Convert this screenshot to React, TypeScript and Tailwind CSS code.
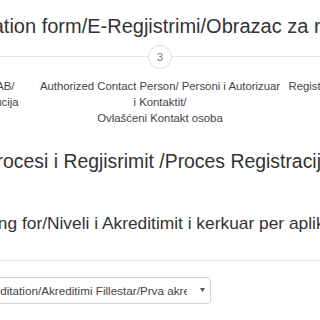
import React from 'react';

function StepCircle({ n }: { n: number }) {
  return (
    <div className="flex h-[24px] w-[24px] shrink-0 items-center justify-center rounded-full border border-[#dcdcdc] bg-white text-[11px] text-[#777]">
      {n}
    </div>
  );
}

export default function App() {
  return (
    <div
      className="h-[320px] w-[320px] overflow-hidden bg-white text-[#333]"
      style={{ fontFamily: '"Liberation Sans", Arial, sans-serif' }}
    >
      {/* page title, centred on the page */}
      <div className="mt-[14.4px] flex h-[24px] justify-center whitespace-nowrap text-[20px] leading-[24px]">
        <h1 className="shrink-0">E-Registration form/E-Regjistrimi/Obrazac za registraciju</h1>
      </div>

      {/* stepper */}
      <div className="mt-[6.6px] flex h-[24px] items-center">
        <div className="h-px flex-1 bg-[#e0e0e0]" />
        <StepCircle n={3} />
        <div className="h-px flex-1 bg-[#e0e0e0]" />
      </div>

      <div className="mt-[8.6px] flex justify-center gap-[7px] text-[11.35px] leading-[16px] text-[#444]">
        <div className="w-[243px] shrink-0 text-right">
          <div className="mr-[17px] whitespace-nowrap">Conformity Assessment Body/ TVK/ CAB/</div>
          <div className="mr-[13px] whitespace-nowrap">Tijelo za ocjenu usaglašenosti/Institucija</div>
        </div>
        <div className="w-[243px] shrink-0 text-center">
          <div>Authorized Contact Person/ Personi i Autorizuar i Kontaktit/</div>
          <div>Ovlašćeni Kontakt osoba</div>
        </div>
        <div className="w-[243px] shrink-0">
          <div className="whitespace-nowrap">Registration Process/ Procesi i Regjistrimit/</div>
          <div className="text-center">Proces Registracije</div>
        </div>
      </div>

      <h2 className="ml-[-255px] mt-[23.8px] h-[24px] whitespace-nowrap text-[19.4px] leading-[24px]">
        <span className="inline-block w-[238.7px] text-right">Registration Process/</span>Procesi i Regjisrimit /Proces Registracije
      </h2>

      <h3 className="ml-[-258px] mt-[39.6px] h-[20px] whitespace-nowrap text-[17.35px] leading-[20px]">
        <span className="inline-block w-[205.7px] text-right">Accreditation you are</span> applying for/Niveli i Akreditimit i kerkuar per aplikim/Nivo akreditacije
      </h3>

      <div className="mt-[27px] h-px bg-[#eaeaea]" />

      <div className="ml-[-70.5px] mt-[16px] flex h-[27px] w-[281.5px] items-center rounded-[3px] border border-[#d4d4d4] bg-white pl-[10px] text-[11.7px] text-[#444]">
        <div className="w-[246.5px] shrink-0 overflow-hidden whitespace-nowrap">
          Initial Accreditation/Akreditimi Fillestar/Prva akreditacija
        </div>
        <svg width="5" height="4" viewBox="0 0 5 4" className="ml-auto mr-[5px]">
          <path d="M0 0h5L2.5 4z" fill="#555" />
        </svg>
      </div>
    </div>
  );
}
